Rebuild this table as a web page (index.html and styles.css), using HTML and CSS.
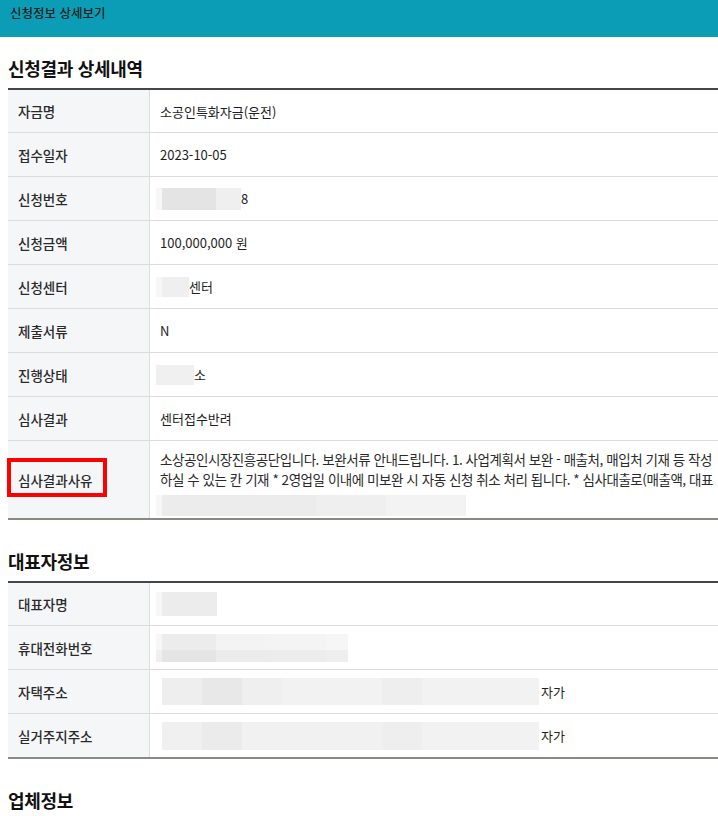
FILE: index.html
```html
<!DOCTYPE html>
<html lang="ko">
<head>
<meta charset="utf-8">
<title>신청정보 상세보기</title>
<link rel="stylesheet" href="styles.css">
</head>
<body>
<header class="topbar">신청정보 상세보기</header>
<main class="content">
  <section class="section first">
    <h2 class="sec-title">신청결과 상세내역</h2>
    <div class="tbl">
      <div class="row"><div class="lbl">자금명</div><div class="val">소공인특화자금(운전)</div></div>
      <div class="row"><div class="lbl">접수일자</div><div class="val">2023-10-05</div></div>
      <div class="row"><div class="lbl">신청번호</div><div class="val"><span class="blur b-no"></span>8</div></div>
      <div class="row"><div class="lbl">신청금액</div><div class="val">100,000,000 원</div></div>
      <div class="row"><div class="lbl">신청센터</div><div class="val"><span class="blur b-center"></span>센터</div></div>
      <div class="row"><div class="lbl">제출서류</div><div class="val">N</div></div>
      <div class="row"><div class="lbl">진행상태</div><div class="val"><span class="blur b-state"></span>소</div></div>
      <div class="row"><div class="lbl">심사결과</div><div class="val">센터접수반려</div></div>
      <div class="row tall">
        <div class="lbl"><span class="mark">심사결과사유</span></div>
        <div class="val long">
          <p class="reason">소상공인시장진흥공단입니다. 보완서류 안내드립니다. 1. 사업계획서 보완 - 매출처, 매입처 기재 등 작성하실 수 있는 칸 기재 * 2영업일 이내에 미보완 시 자동 신청 취소 처리 됩니다. * 심사대출로(매출액, 대표</p>
          <span class="blur b-reason"></span>
        </div>
      </div>
    </div>
  </section>

  <section class="section">
    <h2 class="sec-title">대표자정보</h2>
    <div class="tbl">
      <div class="row"><div class="lbl">대표자명</div><div class="val"><span class="blur b-name"></span></div></div>
      <div class="row"><div class="lbl">휴대전화번호</div><div class="val"><span class="blur b-phone"></span></div></div>
      <div class="row"><div class="lbl">자택주소</div><div class="val"><span class="blur b-addr"></span>자가</div></div>
      <div class="row"><div class="lbl">실거주지주소</div><div class="val"><span class="blur b-addr2"></span>자가</div></div>
    </div>
  </section>

  <section class="section">
    <h2 class="sec-title">업체정보</h2>
  </section>
</main>
</body>
</html>
```

FILE: styles.css
```css
html, body {
  margin: 0;
  padding: 0;
  background: #ffffff;
  overflow: hidden;
}
body {
  font-family: "Noto Sans CJK KR", "Noto Sans", "Liberation Sans", sans-serif;
  color: #222;
}
.topbar {
  height: 37px;
  background: #0b9db6;
  color: #1a1e21;
  font-size: 12.5px;
  font-weight: 500;
  line-height: 26px;
  padding-left: 10px;
  box-sizing: border-box;
}
.content {
  padding-left: 8px;
}
.section {
  margin-top: 29px;
}
.section.first {
  margin-top: 19px;
}
.sec-title {
  margin: 0 0 8px;
  font-size: 18px;
  font-weight: 700;
  line-height: 24px;
  color: #111;
  letter-spacing: -0.3px;
}
.tbl {
  border-top: 2px solid #43474b;
  border-bottom: 2px solid #8a8a84;
  width: 720px;
}
.row {
  display: grid;
  grid-template-columns: 142px 1fr;
  height: 44px;
  box-sizing: border-box;
  border-top: 1px solid #dcdcdc;
}
.row:first-child {
  border-top: none;
  height: 42px;
}
.row.tall {
  height: 78px;
}
.lbl {
  background: #f5f6f8;
  border-right: 1px solid #dcdcdc;
  display: flex;
  align-items: center;
  padding-left: 10px;
  font-size: 13.5px;
  font-weight: 500;
  color: #2a2a2a;
  position: relative;
}
.val {
  display: flex;
  align-items: center;
  padding-left: 10px;
  font-size: 13px;
  color: #1e1e1e;
}
.val.long {
  display: block;
  padding-top: 8px;
  padding-right: 10px;
}
.reason {
  margin: 0;
  font-size: 13.5px;
  line-height: 20px;
  letter-spacing: -0.45px;
  color: #2a2a2a;
}
.mark {
  position: relative;
}
.mark::after {
  content: "";
  position: absolute;
  left: -11px;
  top: -12px;
  width: 100px;
  height: 39px;
  border: 4px solid #ff0000;
  box-sizing: border-box;
}
.blur {
  display: inline-block;
  margin-left: -4px;
  height: 22px;
  background: #ececec;
}
.b-no {
  width: 85px;
  background: linear-gradient(to right, #f7f7f7 0 6px, #e4e4e4 6px 60px, #efefef 60px);
}
.b-center {
  width: 33px;
  height: 20px;
  background: linear-gradient(to right, #f7f7f7 0 6px, #efefef 6px);
}
.b-state {
  width: 38px;
  height: 20px;
  background: #f0f0f0;
}
.b-reason {
  display: block;
  width: 310px;
  height: 21px;
  margin-top: 6px;
  background: linear-gradient(to right, #f7f7f7 0 6px, #ececec 6px 160px, #efefef 160px 230px, #f3f3f3 230px);
}
.b-name {
  width: 61px;
  height: 24px;
  background: linear-gradient(to right, #f7f7f7 0 6px, #ececec 6px);
}
.b-phone {
  width: 192px;
  height: 28px;
  background:
    linear-gradient(to bottom, transparent 0 16px, rgba(0,0,0,0.03) 16px),
    linear-gradient(to right, #f7f7f7 0 6px, #ececec 6px 60px, #f3f3f3 60px 115px, #f4f4f4 115px 170px, #f6f6f6 170px);
}
.b-addr, .b-addr2 {
  width: 377px;
  height: 27px;
  margin-left: 2px;
  margin-right: 2px;
  background: linear-gradient(to right, #eeeeee 0 40px, #e8e8e8 40px 80px, #efefef 80px 120px, #f2f2f2 120px 220px, #eeeeee 220px 260px, #f2f2f2 260px);
}
.b-addr2 {
  height: 28px;
  background: linear-gradient(to right, #f0f0f0 0 40px, #ebebeb 40px 80px, #f1f1f1 80px 220px, #eeeeee 220px 260px, #f2f2f2 260px);
}
```
